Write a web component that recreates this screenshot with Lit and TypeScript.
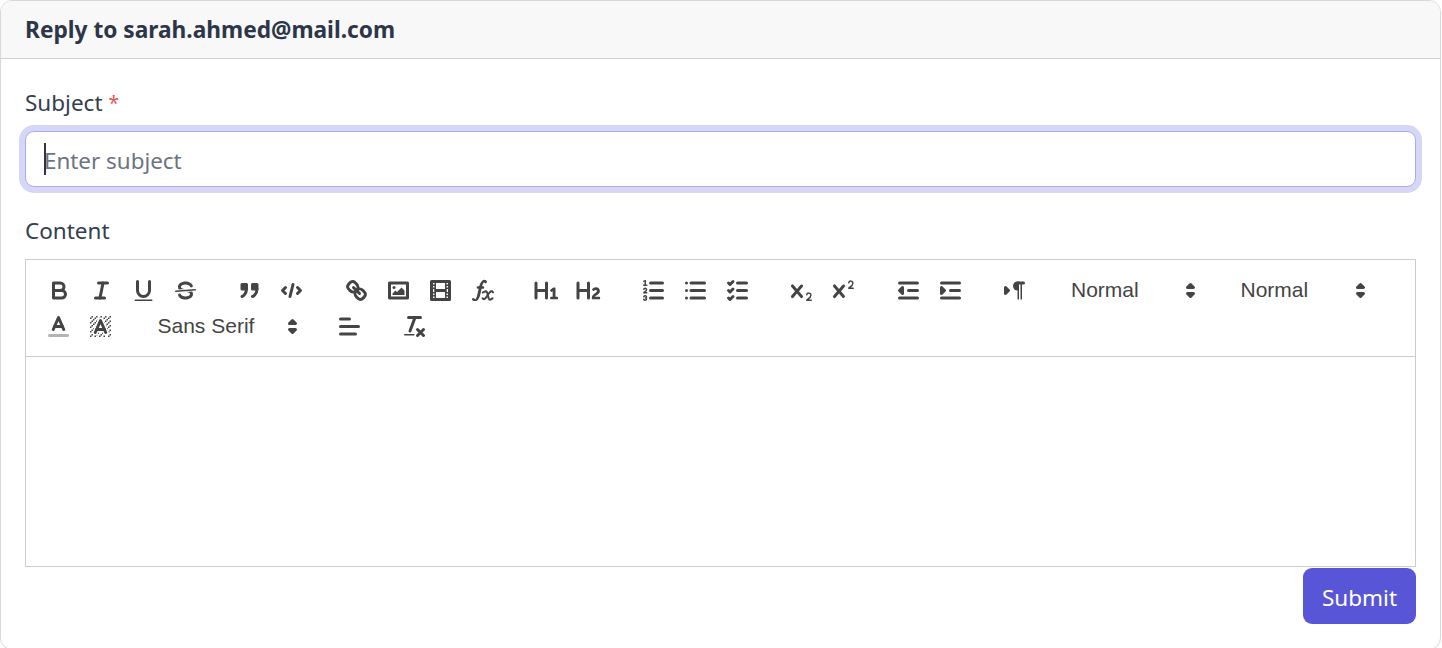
import { LitElement, html, css, svg } from "lit";
import { customElement } from "lit/decorators.js";

const L = (x1: number, x2: number, y1: number, y2: number, c = "s") =>
  svg`<line class=${c} x1=${x1} x2=${x2} y1=${y1} y2=${y2}></line>`;
const R = (x: number, y: number, w = 1, h = 1) => svg`<rect class="f" x=${x} y=${y} width=${w} height=${h}></rect>`;

const icons: Record<string, unknown> = {
  bold: svg`<path class="s" d="M5,4H9.5A2.5,2.5,0,0,1,12,6.5v0A2.5,2.5,0,0,1,9.5,9H5A0,0,0,0,1,5,9V4A0,0,0,0,1,5,4Z"></path><path class="s" d="M5,9h5.5A2.5,2.5,0,0,1,13,11.5v0A2.5,2.5,0,0,1,10.5,14H5a0,0,0,0,1,0,0V9A0,0,0,0,1,5,9Z"></path>`,
  italic: svg`${L(7, 13, 4, 4)}${L(5, 11, 14, 14)}${L(8, 10, 14, 4)}`,
  underline: svg`<path class="s" d="M5,3V9a4.012,4.012,0,0,0,4,4H9a4.012,4.012,0,0,0,4-4V3"></path><rect class="f" height="1" rx="0.5" ry="0.5" width="12" x="3" y="15"></rect>`,
  strike: svg`${L(15.5, 2.5, 8.5, 9.5, "s t")}<path class="f" d="M9.007,8C6.542,7.791,6,7.519,6,6.5,6,5.792,7.283,5,9,5c1.571,0,2.765.679,2.969,1.309a1,1,0,0,0,1.9-.617C13.356,4.106,11.354,3,9,3,6.2,3,4,4.538,4,6.5a3.2,3.2,0,0,0,.5,1.843Z"></path><path class="f" d="M8.984,10C11.457,10.208,12,10.479,12,11.5c0,.708-1.283,1.5-3,1.5-1.571,0-2.765-.679-2.969-1.309a1,1,0,1,0-1.9.617C4.644,13.894,6.646,15,9,15c2.8,0,5-1.538,5-3.5a3.2,3.2,0,0,0-.5-1.843Z"></path>`,
  blockquote: svg`<rect class="s f" height="3" width="3" x="4" y="5"></rect><rect class="s f" height="3" width="3" x="11" y="5"></rect><path class="s f e" d="M7,8c0,4.031-3,5-3,5"></path><path class="s f e" d="M14,8c0,4.031-3,5-3,5"></path>`,
  code: svg`<polyline class="s e" points="5 7 3 9 5 11"></polyline><polyline class="s e" points="13 7 15 9 13 11"></polyline>${L(10, 8, 5, 13)}`,
  link: svg`${L(7, 11, 7, 11)}<path class="s e" d="M8.9,4.577a3.476,3.476,0,0,1,.36,4.679A3.476,3.476,0,0,1,4.577,8.9C3.185,7.5,2.035,6.4,4.217,4.217S7.5,3.185,8.9,4.577Z"></path><path class="s e" d="M13.423,9.1a3.476,3.476,0,0,0-4.679-.36,3.476,3.476,0,0,0,.36,4.679c1.392,1.392,2.5,2.542,4.679.36S14.815,10.5,13.423,9.1Z"></path>`,
  image: svg`<rect class="s" height="10" width="12" x="3" y="4"></rect><circle class="f" cx="6" cy="7" r="1"></circle><polyline class="f e" points="5 12 5 11 7 9 8 10 11 7 13 9 13 12 5 12"></polyline>`,
  video: svg`<rect class="s" height="12" width="12" x="3" y="3"></rect>${R(5, 3, 1, 12)}${R(12, 3, 1, 12)}${R(5, 8, 8, 2)}${R(3, 5, 3)}${R(3, 7, 3)}${R(3, 10, 3)}${R(3, 12, 3)}${R(12, 5, 3)}${R(12, 7, 3)}${R(12, 10, 3)}${R(12, 12, 3)}`,
  formula: svg`<path class="f" d="M11.759,2.482a2.561,2.561,0,0,0-3.53.607A7.656,7.656,0,0,0,6.8,6.2C6.109,9.188,5.275,14.677,4.15,14.927a1.545,1.545,0,0,0-1.3-.933A0.922,0.922,0,0,0,2,15.036S1.954,16,4.119,16s3.091-2.691,3.7-5.553c0.177-.826.36-1.726,0.554-2.6L8.775,6.2c0.381-1.421.807-2.521,1.306-2.676a1.014,1.014,0,0,0,1.02.56A0.966,0.966,0,0,0,11.759,2.482Z"></path><rect class="f" height="1.6" rx="0.8" ry="0.8" width="5" x="5.15" y="6.2"></rect><path class="x" d="M9.2,10.4c1-.9,2.2-1.2,2.8-.2.5.9.7,3,1.2,4.2.4.9,1.2,1,2.5-.2"></path><path class="x" d="M16,10.2c-.5-.9-1.5-.8-2.2,0-.9,1-1.9,2.9-2.8,3.9-.7.8-1.5.9-1.9.1"></path>`,
  h1: svg`<path class="f" d="M10,4V14a1,1,0,0,1-2,0V10H3v4a1,1,0,0,1-2,0V4A1,1,0,0,1,3,4V8H8V4a1,1,0,0,1,2,0Zm6.06787,9.209H14.98975V7.59863a.54085.54085,0,0,0-.605-.60547h-.62744a1.01119,1.01119,0,0,0-.748.29688L11.645,8.56641a.5435.5435,0,0,0-.022.8584l.28613.30762a.53861.53861,0,0,0,.84717.0332l.09912-.08789a1.2137,1.2137,0,0,0,.2417-.35254h.02246s-.01123.30859-.01123.60547V13.209H12.041a.54085.54085,0,0,0-.605.60547v.43945a.54085.54085,0,0,0,.605.60547h4.02686a.54085.54085,0,0,0,.605-.60547v-.43945A.54085.54085,0,0,0,16.06787,13.209Z"></path>`,
  h2: svg`<path class="f" d="M16.73975,13.81445v.43945a.54085.54085,0,0,1-.605.60547H11.855a.58392.58392,0,0,1-.64893-.60547V14.0127c0-2.90527,3.39941-3.42187,3.39941-4.55469a.77675.77675,0,0,0-.84717-.78125,1.17684,1.17684,0,0,0-.83594.38477c-.2749.26367-.561.374-.85791.13184l-.4292-.34082c-.30811-.24219-.38525-.51758-.1543-.81445a2.97155,2.97155,0,0,1,2.45361-1.17676,2.45393,2.45393,0,0,1,2.68408,2.40918c0,2.45312-3.1792,2.92676-3.27832,3.93848h2.79443A.54085.54085,0,0,1,16.73975,13.81445ZM9,3A.99974.99974,0,0,0,8,4V8H3V4A1,1,0,0,0,1,4V14a1,1,0,0,0,2,0V10H8v4a1,1,0,0,0,2,0V4A.99974.99974,0,0,0,9,3Z"></path>`,
  ol: svg`${L(7, 15, 4, 4)}${L(7, 15, 9, 9)}${L(7, 15, 14, 14)}${L(2.5, 4.5, 5.5, 5.5, "s t")}<path class="f" d="M3.5,6A0.5,0.5,0,0,1,3,5.5V3.085l-0.276.138A0.5,0.5,0,0,1,2.053,3c-0.124-.247-0.023-0.324.224-0.447l1-.5A0.5,0.5,0,0,1,4,2.5v3A0.5,0.5,0,0,1,3.5,6Z"></path><path class="s t" d="M4.5,10.5h-2c0-.234,1.85-1.076,1.85-2.234A0.959,0.959,0,0,0,2.5,8.156"></path><path class="s t" d="M2.5,14.846a0.959,0.959,0,0,0,1.85-.109A0.7,0.7,0,0,0,3.75,14a0.688,0.688,0,0,0,.6-0.736,0.959,0.959,0,0,0-1.85-.109"></path>`,
  ul: svg`${L(6, 15, 4, 4)}${L(6, 15, 9, 9)}${L(6, 15, 14, 14)}${L(3, 3, 4, 4)}${L(3, 3, 9, 9)}${L(3, 3, 14, 14)}`,
  check: svg`${L(9, 15, 4, 4)}<polyline class="s" points="3 4 4 5 6 3"></polyline>${L(9, 15, 14, 14)}<polyline class="s" points="3 14 4 15 6 13"></polyline>${L(9, 15, 9, 9)}<polyline class="s" points="3 9 4 10 6 8"></polyline>`,
  sub: svg`<path class="f" d="M15.5,15H13.861a3.858,3.858,0,0,0,1.914-2.975,1.8,1.8,0,0,0-1.6-1.751A1.921,1.921,0,0,0,12.021,11.7a0.50013,0.50013,0,1,0,.957.291h0a0.914,0.914,0,0,1,1.053-.725,0.81,0.81,0,0,1,.744.762c0,1.076-1.16971,1.86982-1.93971,2.43082A1.45639,1.45639,0,0,0,12,15.5a0.5,0.5,0,0,0,.5.5h3A0.5,0.5,0,0,0,15.5,15Z"></path><path class="f" d="M9.65,5.241a1,1,0,0,0-1.409.108L6,7.964,3.759,5.349A1,1,0,0,0,2.192,6.59178Q2.21541,6.6213,2.241,6.649L4.684,9.5,2.241,12.35A1,1,0,0,0,3.71,13.70722q0.02557-.02768.049-0.05722L6,11.036,8.241,13.65a1,1,0,1,0,1.567-1.24277Q9.78459,12.3777,9.759,12.35L7.316,9.5,9.759,6.651A1,1,0,0,0,9.65,5.241Z"></path>`,
  sup: svg`<path class="f" d="M15.5,7H13.861a4.015,4.015,0,0,0,1.914-2.975,1.8,1.8,0,0,0-1.6-1.751A1.922,1.922,0,0,0,12.021,3.7a0.5,0.5,0,1,0,.957.291,0.917,0.917,0,0,1,1.053-.725,0.81,0.81,0,0,1,.744.762c0,1.077-1.164,1.925-1.934,2.486A1.423,1.423,0,0,0,12,7.5a0.5,0.5,0,0,0,.5.5h3A0.5,0.5,0,0,0,15.5,7Z"></path><path class="f" d="M9.651,5.241a1,1,0,0,0-1.41.108L6,7.964,3.759,5.349a1,1,0,1,0-1.519,1.3L4.683,9.5,2.241,12.35a1,1,0,1,0,1.519,1.3L6,11.036l2.241,2.614a1,1,0,0,0,1.519-1.3L7.317,9.5,9.759,6.651A1,1,0,0,0,9.651,5.241Z"></path>`,
  outdent: svg`${L(3, 15, 14, 14)}${L(3, 15, 4, 4)}${L(9, 15, 9, 9)}<polyline class="s f" points="5 7 5 11 3 9 5 7"></polyline>`,
  indent: svg`${L(3, 15, 14, 14)}${L(3, 15, 4, 4)}${L(9, 15, 9, 9)}<polyline class="s f" points="3 7 3 11 5 9 3 7"></polyline>`,
  direction: svg`<polygon class="s f" points="3 11 5 9 3 7 3 11"></polygon>${L(15, 11, 4, 4, "s f")}<path class="f" d="M11,3a3,3,0,0,0,0,6h1V3H11Z"></path>${R(11, 4, 1, 11)}${R(13, 4, 1, 11)}`,
  color: svg`${L(3, 15, 15, 15, "s o")}<polyline class="s" points="5.5 11 9 3 12.5 11"></polyline>${L(11.63, 6.38, 9, 9)}`,
  background: svg`<g class="f"><polygon points="6 6.868 6 6 5 6 5 7 5.942 7 6 6.868"></polygon><rect height="1" width="1" x="4" y="4"></rect><polygon points="6.817 5 6 5 6 6 6.38 6 6.817 5"></polygon><rect height="1" width="1" x="2" y="6"></rect><rect height="1" width="1" x="3" y="5"></rect><rect height="1" width="1" x="4" y="7"></rect><polygon points="4 11.439 4 11 3 11 3 12 3.755 12 4 11.439"></polygon><rect height="1" width="1" x="2" y="12"></rect><rect height="1" width="1" x="2" y="9"></rect><rect height="1" width="1" x="2" y="15"></rect><polygon points="4.63 10 4 10 4 11 4.192 11 4.63 10"></polygon><rect height="1" width="1" x="3" y="8"></rect><path d="M10.832,4.2L11,4.582V4H10.708A1.948,1.948,0,0,1,10.832,4.2Z"></path><path d="M7,4.582L7.168,4.2A1.929,1.929,0,0,1,7.292,4H7V4.582Z"></path><path d="M8,13H7.683l-0.351.8a1.933,1.933,0,0,1-.124.2H8V13Z"></path><rect height="1" width="1" x="12" y="2"></rect><rect height="1" width="1" x="11" y="3"></rect><path d="M9,3H8V3.282A1.985,1.985,0,0,1,9,3Z"></path><rect height="1" width="1" x="2" y="3"></rect><rect height="1" width="1" x="6" y="2"></rect><rect height="1" width="1" x="3" y="2"></rect><rect height="1" width="1" x="5" y="3"></rect><rect height="1" width="1" x="9" y="2"></rect><rect height="1" width="1" x="15" y="14"></rect><polygon points="13.447 10.174 13.469 10.225 13.472 10.232 13.808 11 14 11 14 10 13.37 10 13.447 10.174"></polygon><rect height="1" width="1" x="13" y="7"></rect><rect height="1" width="1" x="15" y="5"></rect><rect height="1" width="1" x="14" y="6"></rect><rect height="1" width="1" x="15" y="8"></rect><rect height="1" width="1" x="14" y="9"></rect><path d="M3.775,14H3v1H4V14.314A1.97,1.97,0,0,1,3.775,14Z"></path><rect height="1" width="1" x="14" y="3"></rect><polygon points="12 6.868 12 6 11.62 6 12 6.868"></polygon><rect height="1" width="1" x="15" y="2"></rect><rect height="1" width="1" x="12" y="5"></rect><rect height="1" width="1" x="13" y="4"></rect><polygon points="12.933 9 13 9 13 8 12.495 8 12.933 9"></polygon><rect height="1" width="1" x="9" y="14"></rect><rect height="1" width="1" x="8" y="15"></rect><path d="M6,14.926V15H7V14.316A1.993,1.993,0,0,1,6,14.926Z"></path><rect height="1" width="1" x="5" y="15"></rect><path d="M10.668,13.8L10.317,13H10v1h0.792A1.947,1.947,0,0,1,10.668,13.8Z"></path><rect height="1" width="1" x="11" y="15"></rect><path d="M14.332,12.2a1.99,1.99,0,0,1,.166.8H15V12H14.245Z"></path><rect height="1" width="1" x="14" y="15"></rect><rect height="1" width="1" x="15" y="11"></rect></g><polyline class="s" points="5.5 13 9 5 12.5 13"></polyline>${L(11.63, 6.38, 11, 11)}`,
  align: svg`${L(3, 15, 9, 9)}${L(3, 13, 14, 14)}${L(3, 9, 4, 4)}`,
  clean: svg`${L(5, 13, 3, 3)}${L(6, 9.35, 12, 3)}${L(11, 15, 11, 15)}${L(15, 11, 11, 15)}<rect class="f" height="1" rx="0.5" ry="0.5" width="7" x="2" y="14"></rect>`,
  arrows: svg`<polygon class="s" points="7 11 9 13 11 11 7 11"></polygon><polygon class="s" points="7 7 9 5 11 7 7 7"></polygon>`,
};

const ico = (n: string) => html`<svg class="ico" viewBox="0 0 18 18">${icons[n]}</svg>`;
const btn = (n: string) => html`<span class="btn">${ico(n)}</span>`;
const picker = (label: string, wide = false) =>
  html`<span class="picker ${wide ? "wide" : ""}"><span>${label}</span>${ico("arrows")}</span>`;

@customElement("app-root")
export class AppRoot extends LitElement {
  static styles = css`
    :host { display: block; height: 648px; overflow: hidden; font-family: "Noto Sans", "Open Sans", sans-serif; color: #2c384a; }
    * { box-sizing: border-box; }
    .card { height: 650px; width: 1441px; border: 1px solid #d8d8d8; border-radius: 12px; background: #fff; overflow: hidden; display: flex; flex-direction: column; }
    .head { height: 58px; flex: none; background: #f8f8f8; border-bottom: 1px solid #d0d0d0; padding: 0 24px; display: flex; align-items: center; font-size: 22.7px; font-weight: 700; color: #2c3648; }
    .body { padding: 24px 24px 0; display: flex; flex-direction: column; }
    label { display: block; font-size: 22.5px; line-height: 36px; padding-top: 2px; height: 36px; margin-bottom: 12px; color: #343e50; }
    .req { color: #e55353; font-size: 19px; vertical-align: 1px; }
    .field { position: relative; margin-bottom: 24px; height: 56px; }
    input { display: block; width: 100%; height: 56px; border: 1.5px solid #acabea; border-radius: 9px; box-shadow: 0 0 0 6px #d6d6f6; outline: none; padding: 2px 18px 0; font: inherit; font-size: 22.4px; color: #2c384a; background: #fff; }
    input::placeholder { color: #6c7480; opacity: 1; }
    .caret { position: absolute; left: 19px; top: 12px; width: 2px; height: 32px; background: #2c3648; }
    .toolbar { border: 1px solid #ccc; padding: 12px; display: flex; flex-wrap: wrap; font-family: "Liberation Sans", Arial, sans-serif; }
    .grp { display: flex; margin-right: 22.5px; }
    .grp.nudge { margin-left: -1px; margin-right: 23.5px; }
    .btn { width: 42px; height: 36px; display: flex; align-items: center; justify-content: center; }
    .picker { width: 147px; height: 36px; display: flex; align-items: center; justify-content: space-between; padding-left: 13px; padding-right: 1px; font-size: 21px; font-weight: 500; color: #444; }
    .picker.wide { width: 162px; }
    .ico { width: 27px; height: 27px; display: block; flex: none; }
    .s { fill: none; stroke: #444; stroke-width: 2; stroke-linecap: round; stroke-linejoin: round; }
    .t { stroke-width: 1; }
    .f, .s.f { fill: #444; }
    .e { fill-rule: evenodd; }
    .o { opacity: 0.4; }
    .x { fill: none; stroke: #444; stroke-width: 1.35; stroke-linecap: round; }
    .editor { height: 210px; border: 1px solid #ccc; border-top: 0; }
    .actions { display: flex; justify-content: flex-end; margin-top: 1px; }
    .submit { width: 113px; height: 56px; border: 0; border-radius: 9px; background: #5856d6; color: #fff; font: inherit; font-size: 22.5px; padding: 2px 0 0; }
  `;

  render() {
    return html`
      <div class="card">
        <div class="head">Reply to sarah.ahmed@mail.com</div>
        <div class="body">
          <label>Subject <span class="req">*</span></label>
          <div class="field">
            <input type="text" placeholder="Enter subject" />
            <span class="caret"></span>
          </div>
          <label>Content</label>
          <div class="toolbar">
            <span class="grp">${btn("bold")}${btn("italic")}${btn("underline")}${btn("strike")}</span>
            <span class="grp">${btn("blockquote")}${btn("code")}</span>
            <span class="grp">${btn("link")}${btn("image")}${btn("video")}${btn("formula")}</span>
            <span class="grp">${btn("h1")}${btn("h2")}</span>
            <span class="grp">${btn("ol")}${btn("ul")}${btn("check")}</span>
            <span class="grp">${btn("sub")}${btn("sup")}</span>
            <span class="grp">${btn("outdent")}${btn("indent")}</span>
            <span class="grp">${btn("direction")}</span>
            <span class="grp">${picker("Normal")}</span>
            <span class="grp">${picker("Normal")}</span>
            <span class="grp nudge">${btn("color")}${btn("background")}</span>
            <span class="grp">${picker("Sans Serif", true)}</span>
            <span class="grp nudge">${btn("align")}</span>
            <span class="grp">${btn("clean")}</span>
          </div>
          <div class="editor"></div>
          <div class="actions"><button class="submit">Submit</button></div>
        </div>
      </div>
    `;
  }
}
